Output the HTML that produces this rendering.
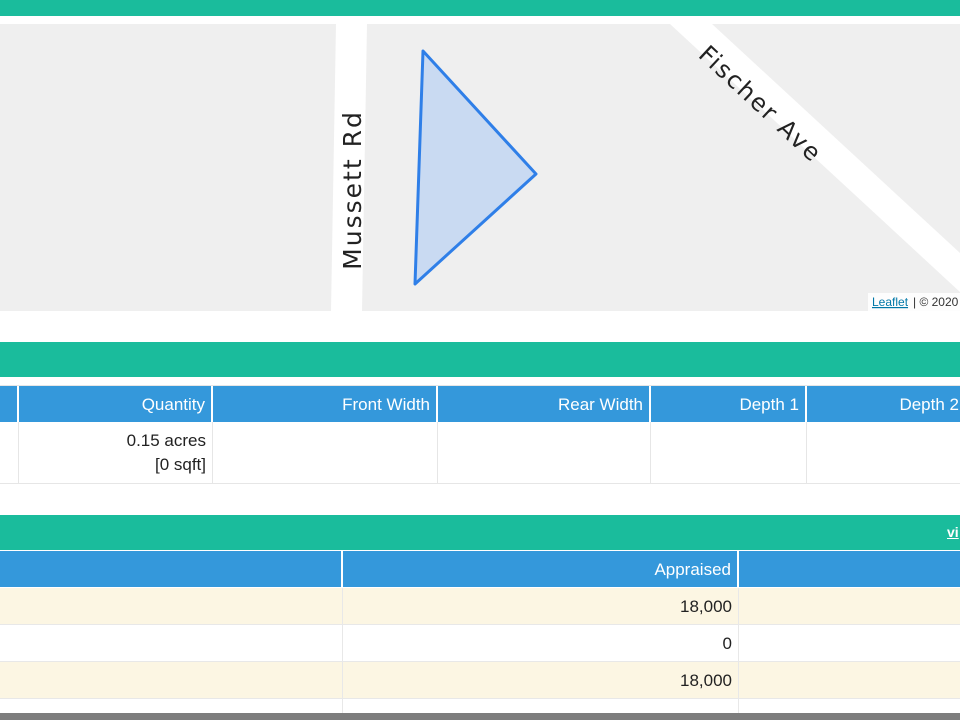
<!DOCTYPE html>
<html><head><meta charset="utf-8"><style>
*{margin:0;padding:0;box-sizing:border-box}
body{width:960px;height:720px;overflow:hidden;background:#fff;font-family:"Liberation Sans",sans-serif;position:relative}
.abs{position:absolute}
.teal{background:#1abc9c;left:0;width:960px}
.hdr{background:#3498db;color:#fff;font-size:17px;text-align:right;padding-right:6px;line-height:37px;border-right:2px solid #fff;height:36px}
.cell{border-right:1px solid #e6e6e6;border-bottom:1px solid #e6e6e6;font-size:17px;color:#222;text-align:right;padding-right:6px}
.num{font-size:17px}
</style></head><body>
<div class="abs teal" style="top:0;height:16px"></div>
<svg class="abs" style="left:0;top:24px" width="960" height="287">
<rect width="960" height="287" fill="#efefef"/>
<polygon points="336,0 367,0 362,287 331,287" fill="#fff"/>
<polygon points="670,0 712,0 960,229 960,268" fill="#fff"/>
<polygon points="423,27 536,150 415,260" fill="#c9daf2" stroke="#2f7fe8" stroke-width="3" stroke-linejoin="round"/>
<text x="0" y="0" transform="translate(361,166) rotate(-90)" text-anchor="middle" font-family="DejaVu Sans,sans-serif" font-size="25" fill="#222" letter-spacing="2">Mussett Rd</text>
<text x="0" y="0" transform="translate(755,86) rotate(43)" text-anchor="middle" font-family="DejaVu Sans,sans-serif" font-size="24" fill="#222" letter-spacing="2">Fischer Ave</text>
<rect x="868" y="269" width="92" height="18" fill="#fff" opacity="0.85"/>
<text x="872" y="282" font-size="12" fill="#0078a8" text-decoration="underline" font-family="Liberation Sans,sans-serif">Leaflet</text>
<text x="913" y="282" font-size="12" fill="#333" font-family="Liberation Sans,sans-serif">| © 2020</text>
</svg>
<div class="abs teal" style="top:342px;height:35px"></div>
<div class="abs" style="top:385px;left:0;width:960px;height:100px;border-top:1px solid #e6e6e6">
<div class="abs hdr" style="left:0;width:19px;top:0"></div>
<div class="abs hdr" style="left:19px;width:194px;top:0">Quantity</div>
<div class="abs hdr" style="left:213px;width:225px;top:0">Front Width</div>
<div class="abs hdr" style="left:438px;width:213px;top:0">Rear Width</div>
<div class="abs hdr" style="left:651px;width:156px;top:0">Depth 1</div>
<div class="abs hdr" style="left:807px;width:160px;top:0">Depth 2</div>
<div class="abs cell" style="left:0;width:19px;top:36px;height:62px"></div>
<div class="abs cell" style="left:19px;width:194px;top:36px;height:62px;line-height:24px;padding-top:7px">0.15 acres<br>[0 sqft]</div>
<div class="abs cell" style="left:213px;width:225px;top:36px;height:62px"></div>
<div class="abs cell" style="left:438px;width:213px;top:36px;height:62px"></div>
<div class="abs cell" style="left:651px;width:156px;top:36px;height:62px"></div>
<div class="abs cell" style="left:807px;width:160px;top:36px;height:62px"></div>
</div>
<div class="abs teal" style="top:515px;height:35px"><span class="abs" style="left:947px;top:9px;color:#fff;font-weight:bold;font-size:14px;text-decoration:underline">vi</span></div>
<div class="abs hdr" style="left:0;width:343px;top:551px"></div>
<div class="abs hdr" style="left:343px;width:396px;top:551px">Appraised</div>
<div class="abs hdr" style="left:739px;width:230px;top:551px"></div>
<div class="abs" style="left:0;top:588px;width:960px;height:37px;background:#fcf6e3"></div>
<div class="abs" style="left:0;top:662px;width:960px;height:37px;background:#fcf6e3"></div>
<div class="abs" style="left:0;top:624px;width:960px;height:1px;background:#e8e8e8"></div>
<div class="abs" style="left:0;top:661px;width:960px;height:1px;background:#e8e8e8"></div>
<div class="abs" style="left:0;top:698px;width:960px;height:1px;background:#e8e8e8"></div>
<div class="abs" style="left:342px;top:588px;width:1px;height:125px;background:#e8e8e8"></div>
<div class="abs" style="left:738px;top:588px;width:1px;height:125px;background:#e8e8e8"></div>
<div class="abs num" style="left:343px;top:588px;width:389px;line-height:37px;text-align:right;color:#222">18,000</div>
<div class="abs num" style="left:343px;top:625px;width:389px;line-height:37px;text-align:right;color:#222">0</div>
<div class="abs num" style="left:343px;top:662px;width:389px;line-height:37px;text-align:right;color:#222">18,000</div>
<div class="abs" style="left:0;top:713px;width:960px;height:7px;background:#7d7d7d"></div>
</body></html>
